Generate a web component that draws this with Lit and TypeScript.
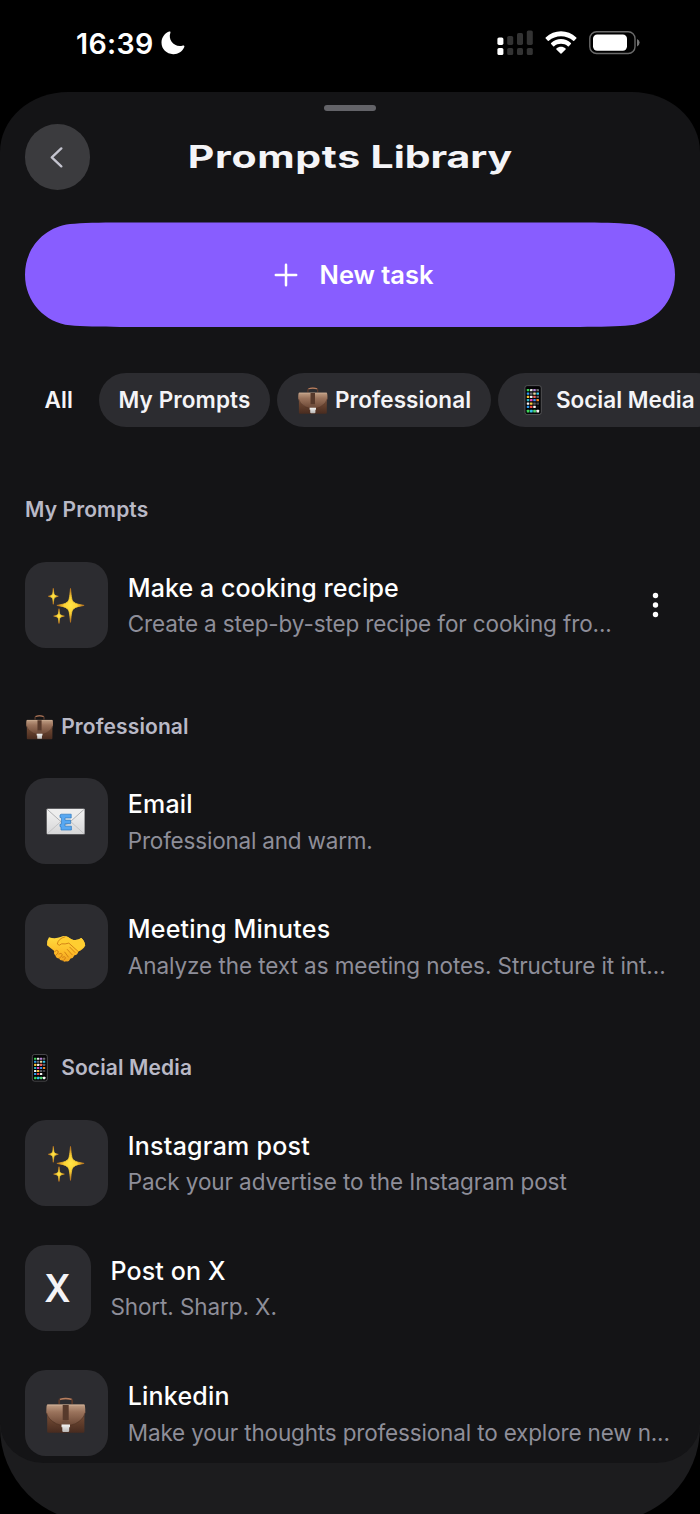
import { LitElement, html, svg, css, TemplateResult } from "lit";
import { customElement, property } from "lit/decorators.js";
import { styleMap } from "lit/directives/style-map.js";

type Glyph = "sparkles" | "email" | "handshake" | "briefcase" | "phone";

const phoneColors = [
  ["#3fd65a", "#e8e8ea", "#b784d8", "#6d6d72"],
  ["#2f9bf0", "#6d6d72", "#e8d9a0", "#35c3e8"],
  ["#f2c53a", "#f5f5f5", "#f0605a", "#5c5c62"],
  ["#35b8c8", "#e345b8", "#3f8cf0", "#f08a24"],
  ["#f5f5f5", "#f6c83c", "#5c5c62", "#444448"],
  ["#2f9bf0", "#ef4b45", "#f5f5f5", "#101012"],
];
const dockColors = ["#3fd65a", "#35c3e8", "#4fd673", "#f5f5f5"];

const star = (cx: number, cy: number, rx: number, ry: number) => {
  const a = rx * 0.24, b = ry * 0.19, c = rx * 0.08, d = ry * 0.06;
  return `M${cx} ${cy - ry}C${cx + c} ${cy - ry * 0.4} ${cx + c} ${cy - b * 1.6} ${cx + a} ${cy - b}C${cx + rx * 0.4} ${cy - d} ${cx + rx * 0.7} ${cy - d} ${cx + rx} ${cy}C${cx + rx * 0.7} ${cy + d} ${cx + rx * 0.4} ${cy + d} ${cx + a} ${cy + b}C${cx + c} ${cy + b * 1.6} ${cx + c} ${cy + ry * 0.4} ${cx} ${cy + ry}C${cx - c} ${cy + ry * 0.4} ${cx - c} ${cy + b * 1.6} ${cx - a} ${cy + b}C${cx - rx * 0.4} ${cy + d} ${cx - rx * 0.7} ${cy + d} ${cx - rx} ${cy}C${cx - rx * 0.7} ${cy - d} ${cx - rx * 0.4} ${cy - d} ${cx - a} ${cy - b}C${cx - c} ${cy - b * 1.6} ${cx - c} ${cy - ry * 0.4} ${cx} ${cy - ry}Z`;
};

const glyphs: Record<Glyph, TemplateResult> = {
  sparkles: svg`
    <defs><radialGradient id="s"><stop offset="0" stop-color="#ffe548"/><stop offset=".45" stop-color="#fdd233"/><stop offset="1" stop-color="#b86e1c"/></radialGradient></defs>
    <g fill="url(#s)" stroke="url(#s)" stroke-width=".8" stroke-linejoin="round">
      <path d=${star(24.5, 20.4, 13.6, 17)}/><path d=${star(7.3, 11.3, 5, 8)}/><path d=${star(13, 31.1, 5.4, 7.4)}/>
    </g>`,
  email: svg`
    <defs><linearGradient id="e" x2="0" y2="1"><stop stop-color="#f4f4f4"/><stop offset="1" stop-color="#d6d6d7"/></linearGradient></defs>
    <rect x=".7" y="7.7" width="37.9" height="25.6" rx=".8" fill="url(#e)"/>
    <path d="M1 33 15.4 20M38.3 33 24 20" stroke="#bcbcbe" stroke-width=".8" fill="none"/>
    <path d="M1 8.2 17 22.4Q19.7 24.8 22.4 22.4L38.3 8.2" fill="#ededed" stroke="#a9a9ab" stroke-width=".9"/>
    <path d="M15 13.2H25.2V17H19V19.1H24.6V22.7H19V25.2H25.4V29H15V25.9L14 25.6V23.2H15.4V16.6H14V14Z" fill="#58a8f2" stroke="#2f78bd" stroke-width=".7"/>`,
  handshake: svg`
    <defs><linearGradient id="h" x2="0" y2="1"><stop stop-color="#ffdc3f"/><stop offset=".6" stop-color="#fdbd29"/><stop offset="1" stop-color="#f2a41f"/></linearGradient></defs>
    <path d="M3 11.2Q9 13.2 14.6 11Q17.5 9.5 21 10.5L25.5 13.2Q30.8 15.4 35.3 12Q38.6 14.5 39.2 19.6Q37.4 23.6 32.3 25.6Q31.7 29.1 28.5 29.3Q27.4 32.3 24.6 32.4Q22.7 36.2 20.2 35.2Q17.9 36.4 16.6 34.6Q13.7 34.8 13.2 32.5Q10 32.5 9.5 29.5Q7.2 27.6 8.3 24.9L1 19.2Q.5 14.5 3 11.2Z" fill="url(#h)"/>
    <path d="M15.5 17.5Q13.3 20.5 11.3 18.5Q12.4 12 18.4 10.2Q21.2 9.7 25.2 13.2Q30.5 15.4 35.3 12Q38.6 14.5 39.2 19.6L31.8 25.4L22.7 17.1Q18.7 18.5 15.5 17.5Z" fill="#ffce31"/>
    <g fill="none" stroke="#cf7c13" stroke-width=".9" stroke-linecap="round">
      <path d="M19 10.8Q12.2 12.6 11.3 18Q13 20.6 15.7 17.8Q19 18.4 22.8 17.1L32 25.3"/>
      <path d="M23.8 21.2 29 26.5M21.3 23.5 26.2 28.8M18.7 26.1 22.3 31"/>
      <path d="M8.7 25.7Q10.4 23.2 12.2 25.1Q13.2 26.7 9.8 29.4M12.9 27.9Q15.5 26.4 16.3 28.5Q16.4 30.4 13.4 32.1M16.5 31.2Q18.7 29.9 19.5 31.6Q19.4 33.2 17.2 34.6"/>
    </g>`,
  briefcase: svg`
    <defs>
      <linearGradient id="b" x2="0" y2="1"><stop stop-color="#8e6853"/><stop offset=".55" stop-color="#68432f"/><stop offset="1" stop-color="#482b1f"/></linearGradient>
      <linearGradient id="f" x2="0" y2="1"><stop stop-color="#c19f85"/><stop offset=".35" stop-color="#9a735c"/><stop offset="1" stop-color="#6a4634"/></linearGradient>
      <linearGradient id="c" x2="0" y2="1"><stop stop-color="#f5f5f5"/><stop offset="1" stop-color="#b9b7b5"/></linearGradient>
    </defs>
    <path d="M13.2 11V8.1Q13.2 6 15.8 5.9Q19.7 5.3 23.9 5.9Q26.2 6 26.2 8.1V11" fill="none" stroke="#59392b" stroke-width="1.8"/>
    <path d="M14 6.4Q19.7 4.6 25.5 6.4" fill="none" stroke="#b67f60" stroke-width="1.5"/>
    <path d="M1.2 12H38.4V38.2Q38.4 39.7 37 39.7H2.5Q1.2 39.7 1.2 38.2Z" fill="url(#b)"/>
    <path d="M1.2 11.6H38.4Q39.3 12 39.3 19.6Q37.7 26.5 29 30.9Q24 32.7 19.7 32.7Q15 32.7 10.5 30.8Q1.8 26.5.3 19.6Q.3 12.2 1.2 11.6Z" fill="url(#f)"/>
    <path d="M.6 19.8Q2 26.5 10.5 30.8Q15 32.7 19.7 32.7Q24 32.7 29 30.9Q37.7 26.5 39 19.8" fill="none" stroke="#4d3022" stroke-width=".6"/>
    <path d="M1.5 12.1H38.2" stroke="#d2b39b" stroke-width=".8"/>
    <path d="M16.7 12H22.7V27H16.7Z" fill="#56392b"/>
    <path d="M16 30Q16 27 19.7 27Q23.4 27 23.4 30V32H16Z" fill="#704f3e"/>
    <path d="M15.5 31.5H24V34.3H23.2V38Q23.2 38.9 22 38.9H17.5Q16.3 38.9 16.3 38V34.3H15.5Z" fill="url(#c)"/>`,
  phone: svg`
    <rect x="9.2" y=".8" width="21.8" height="38.6" rx="3" fill="#0b0b0d" stroke="#5d5d60" stroke-width="1.1"/>
    <rect x="10.6" y="2.2" width="19" height="35.8" rx="2" fill="#030304"/>
    ${phoneColors.map((row, r) => row.map((c, i) => svg`<rect x=${11.7 + i * 4.3} y=${5.4 + r * 4.45} width="3.4" height="3" rx=".5" fill=${c}/>`))}
    ${dockColors.map((c, i) => svg`<rect x=${11.7 + i * 4.3} y="33" width="3.6" height="3.6" rx=".7" fill=${c}/>`)}`,
};

@customElement("prompt-glyph")
class PromptGlyph extends LitElement {
  @property() name: Glyph = "sparkles";
  static styles = css`
    :host { display: block; flex: none; }
    svg { display: block; width: 100%; height: 100%; overflow: visible; }
  `;
  render() {
    return html`<svg viewBox="0 0 40 40">${glyphs[this.name]}</svg>`;
  }
}

@customElement("status-bar")
class StatusBar extends LitElement {
  static styles = css`
    :host { display: flex; align-items: flex-start; height: 92px; box-sizing: border-box; padding: 26px 60px 0 76px; }
    .time { font-size: 28.6px; line-height: 34px; font-weight: 600; letter-spacing: 0.35px; width: 84.5px; margin-top: 1px; }
    .moon { margin-top: 5px; }
    .spacer { flex: 1; }
    .signal { margin: 4px 12.5px 0 0; }
    .wifi { margin: 5px 12px 0 0; }
    .battery { margin-top: 5px; }
    svg { display: block; flex: none; }
  `;
  render() {
    const tops = [7.5, 6, 3, 0.5];
    return html`
      <span class="time">16:39</span>
      <svg class="moon" width="24" height="24" fill="#fff"><path d="M8.1.6C8.9.2 9.8.8 9.4 1.7C6.7 8.8 13.3 16.5 21.2 14.7C22.9 14.2 23.8 14.8 23.3 16C21.5 20.6 17 23.4 12.1 23.2C5.6 22.9.5 18.1.5 11.8C.5 6.8 3.4 2.4 8.1.6Z"/></svg>
      <span class="spacer"></span>
      <svg class="signal" width="36" height="25">
        ${tops.map((t, i) => svg`
          <rect x=${0.4 + i * 9.8} y=${t} width="6" height=${14.9 - t} rx="1.6" fill=${i ? "#333" : "#fff"}/>
          <rect x=${0.4 + i * 9.8} y="18" width="6" height="7" rx="1.6" fill=${i ? "#333" : "#fff"}/>`)}
      </svg>
      <svg class="wifi" width="32" height="23" fill="#fff">
        <path d="M.7 6.6C9.2-1.9 22.8-1.9 31.3 6.6Q31.8 7.1 31.3 7.6L29.2 9.7Q28.7 10.1 28.2 9.7C21.4 3.6 10.6 3.6 3.8 9.7Q3.3 10.1 2.8 9.7L.7 7.6Q.2 7.1.7 6.6Z"/>
        <path d="M6.1 12.1C11.6 6.7 20.4 6.7 25.9 12.1Q26.4 12.6 25.9 13.1L23.8 15.2Q23.3 15.6 22.8 15.2C19 12 13 12 9.2 15.2Q8.7 15.6 8.2 15.2L6.1 13.1Q5.6 12.6 6.1 12.1Z"/>
        <path d="M11.4 17.4C13.9 15.1 18.1 15.1 20.6 17.4Q21.1 17.9 20.6 18.4L16.5 22.4Q16 22.9 15.5 22.4L11.4 18.4Q10.9 17.9 11.4 17.4Z"/>
      </svg>
      <svg class="battery" width="51" height="24">
        <rect x=".8" y=".8" width="45.2" height="21.7" rx="6.8" fill="none" stroke="#6a6a6a" stroke-width="1.4"/>
        <rect x="4" y="3.6" width="34" height="16.2" rx="4.2" fill="#fff"/>
        <path d="M48 8Q50.6 9 50.6 11.6T48 15.4Z" fill="#757575"/>
      </svg>`;
  }
}

@customElement("prompt-item")
class PromptItem extends LitElement {
  @property() glyph = "";
  @property() letter = "";
  @property() heading = "";
  @property() detail = "";
  @property({ type: Number }) headingTracking = 0.24;
  @property({ type: Number }) detailTracking = -0.09;
  @property({ type: Boolean }) menu = false;
  static styles = css`
    :host { display: flex; height: 85.8px; }
    .tile { display: flex; align-items: center; justify-content: center; flex: none; box-sizing: border-box; padding: 0 21.6px 0 21.4px; height: 100%; border-radius: 21px; background: #2c2c30; }
    prompt-glyph { width: 40px; height: 40px; }
    .letter { width: 22.6px; text-align: center; font-size: 38.5px; line-height: 50px; padding-top: 1px; font-weight: 600; color: #f4f4f7; display: flex; justify-content: center; transform: scaleX(0.95); }
    .body { flex: 1; min-width: 0; padding: 7.8px 0 0 19.8px; white-space: nowrap; }
    .heading { font-size: 25px; line-height: 36.6px; font-weight: 500; color: #fff; }
    .detail { font-size: 22.5px; line-height: 35.2px; color: #8e8e99; }
    .menu { align-self: center; margin-right: 16px; fill: #fff; }
  `;
  render() {
    return html`
      <div class="tile">
        ${this.letter ? html`<span class="letter">${this.letter}</span>` : html`<prompt-glyph name=${this.glyph}></prompt-glyph>`}
      </div>
      <div class="body">
        <div class="heading" style=${styleMap({ letterSpacing: `${this.headingTracking}px` })}>${this.heading}</div>
        <div class="detail" style=${styleMap({ letterSpacing: `${this.detailTracking}px` })}>${this.detail}</div>
      </div>
      ${this.menu ? html`<svg class="menu" width="7" height="26"><circle cx="3.5" cy="3.5" r="2.7"/><circle cx="3.5" cy="13" r="2.7"/><circle cx="3.5" cy="22.5" r="2.7"/></svg>` : null}`;
  }
}

interface Item { glyph?: Glyph; letter?: string; heading: string; detail: string; menu?: boolean; ht?: number; dt?: number }
interface Section { glyph?: Glyph; name: string; items: Item[] }

const sections: Section[] = [
  { name: "My Prompts", items: [
    { glyph: "sparkles", heading: "Make a cooking recipe", detail: "Create a step-by-step recipe for cooking fro...", menu: true, ht: 0.07, dt: -0.11 },
  ] },
  { name: "Professional", glyph: "briefcase", items: [
    { glyph: "email", heading: "Email", detail: "Professional and warm.", dt: -0.2, ht: 0.2 },
    { glyph: "handshake", heading: "Meeting Minutes", detail: "Analyze the text as meeting notes. Structure it int...", ht: 0.18, dt: -0.07 },
  ] },
  { name: "Social Media", glyph: "phone", items: [
    { glyph: "sparkles", heading: "Instagram post", detail: "Pack your advertise to the Instagram post", dt: -0.1 },
    { letter: "X", heading: "Post on X", detail: "Short. Sharp. X.", ht: 0.15 },
    { glyph: "briefcase", heading: "Linkedin", detail: "Make your thoughts professional to explore new n...", dt: -0.16, ht: 0.2 },
  ] },
];

@customElement("app-root")
class AppRoot extends LitElement {
  static styles = css`
    :host { display: block; height: 1514px; overflow: hidden; background: #000; color: #fff; font-family: Inter, "Liberation Sans", sans-serif; }
    .device { height: 1522px; background: linear-gradient(#000 0 1300px, #1c1c1e 1300px); border-radius: 0 0 95px 95px; overflow: hidden; }
    .sheet { height: 1371px; box-sizing: border-box; background: #141416; border-radius: 68px 68px 44px 44px / 60px 60px 40px 40px; padding: 12.6px 25px 0; overflow: hidden; }
    .grabber { width: 52px; height: 6.5px; border-radius: 4px; background: #636368; margin: 0 auto; }
    .header { display: grid; grid-template-columns: 65px 1fr 65px; align-items: center; margin-top: 13.2px; height: 65.4px; }
    .back { display: flex; align-items: center; justify-content: center; width: 65.4px; height: 65.4px; border-radius: 50%; background: #3b3b3e; border: 0; padding: 0 2px 0 0; }
    .title { margin: 0; justify-self: center; font-size: 30.6px; line-height: 40px; font-weight: 700; color: #f4f4f7; white-space: nowrap; transform: scaleX(1.34); }
    .lead { letter-spacing: 0.5px; }
    .rest { letter-spacing: -0.05px; }
    .new { display: flex; align-items: center; justify-content: center; width: 650px; height: 104.5px; margin-top: 32.8px; border: 0; padding: 0 0 0 7px; background: #885dff; color: #fff; font: 600 25.5px Inter, sans-serif; letter-spacing: -0.05px; gap: 22px;
      clip-path: path("M0 52.2C0 25 20 4.5 45 1.6C57 .2 75 0 95 0H555C575 0 593 .2 605 1.6C630 4.5 650 25 650 52.2C650 79.5 630 100 605 102.9C593 104.3 575 104.5 555 104.5H95C75 104.5 57 104.3 45 102.9C20 100 0 79.5 0 52.2Z"); }
    .tabs { display: flex; gap: 7px; margin: 46px -25px 0 0; overflow: hidden; }
    .tab { display: flex; align-items: center; flex: none; box-sizing: border-box; height: 53.7px; padding: 0 19px; border-radius: 27px; background: #2c2c30; font-size: 22.5px; font-weight: 600; letter-spacing: 0.1px; color: #f4f4f7; white-space: nowrap; }
    .all { width: 67px; padding-left: 19.5px; background: none; }
    .mine { width: 171px; padding-left: 19.5px; }
    .pro { width: 214px; }
    .social { width: 225px; letter-spacing: 0; }
    .tab prompt-glyph { width: 30px; height: 30px; margin: -2px 7.5px 0 1.5px; }
    .tab.social prompt-glyph { margin: 0 7.5px 0 1.4px; }
    .section { margin-top: 64px; }
    .section:first-of-type { margin-top: 0; }
    .name { display: flex; align-items: center; margin: 0 0 38.4px; height: 28px; font-size: 21px; font-weight: 600; letter-spacing: 0.12px; color: #b9b9c6; }
    .name span { padding-top: 0.6px; }
    .name prompt-glyph { width: 27.5px; height: 27.5px; margin: 0 7.5px 0 1.2px; }
    .items { display: flex; flex-direction: column; gap: 39.5px; }
    .list { padding-top: 69px; }
  `;
  render() {
    return html`
      <div class="device">
        <status-bar></status-bar>
        <main class="sheet">
          <div class="grabber"></div>
          <header class="header">
            <button class="back" aria-label="Back">
              <svg width="14" height="22" fill="none" stroke="#c4c4cf" stroke-width="2.3" stroke-linecap="round" stroke-linejoin="round"><path d="M11.3 2.4 1.8 11.4 11.3 20.4"/></svg>
            </button>
            <h1 class="title"><span class="lead">Prompts</span> <span class="rest">Library</span></h1>
          </header>
          <button class="new">
            <svg width="24" height="24" stroke="#fff" stroke-width="2.5" stroke-linecap="round"><path d="M12 1.8V22.2M1.8 12H22.2"/></svg>
            <span>New task</span>
          </button>
          <nav class="tabs">
            <span class="tab all">All</span>
            <span class="tab mine">My Prompts</span>
            <span class="tab pro"><prompt-glyph name="briefcase"></prompt-glyph>Professional</span>
            <span class="tab social"><prompt-glyph name="phone"></prompt-glyph>Social Media</span>
          </nav>
          <div class="list">
            ${sections.map((s) => html`
              <section class="section">
                <h2 class="name">${s.glyph ? html`<prompt-glyph name=${s.glyph}></prompt-glyph>` : null}<span>${s.name}</span></h2>
                <div class="items">
                  ${s.items.map((i) => html`<prompt-item .glyph=${i.glyph ?? ""} .letter=${i.letter ?? ""} .heading=${i.heading} .detail=${i.detail} .menu=${!!i.menu} .headingTracking=${i.ht ?? 0.24} .detailTracking=${i.dt ?? -0.09}></prompt-item>`)}
                </div>
              </section>`)}
          </div>
        </main>
      </div>`;
  }
}
